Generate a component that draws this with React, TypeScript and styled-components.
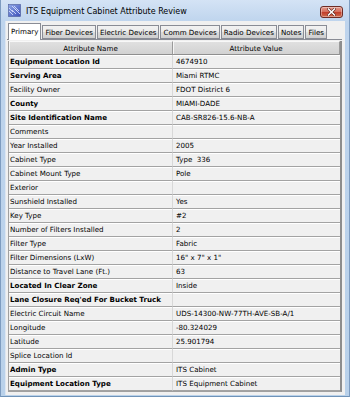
import React from "react";
import styled, { createGlobalStyle } from "styled-components";

const Global = createGlobalStyle`
  html, body { margin: 0; padding: 0; background: #b9d1ea; }
  * { box-sizing: border-box; }
`;

const Window = styled.div`
  width: 350px;
  height: 397px;
  display: flex;
  flex-direction: column;
  background: linear-gradient(180deg, #d4e3f5 0px, #bed4ed 22px, #b9d1ea 100%);
  border-left: 1px solid #7e9cc0;
  border-right: 1px solid #7e9cc0;
  border-bottom: 1px solid #6f93b8;
  padding: 0 4px 4px 4px;
  font-family: "DejaVu Sans", sans-serif;
  overflow: hidden;
`;

const TitleBar = styled.div`
  height: 21px;
  flex: none;
  display: flex;
  align-items: center;
  padding: 0 2px 0 3px;
  gap: 5px;
`;

const Title = styled.div`
  flex: 1;
  font-size: 8px;
  color: #000;
  white-space: nowrap;
  padding-top: 1px;
`;

const CloseButton = styled.div`
  width: 23px;
  height: 12px;
  margin-top: 3px;
  border: 1px solid #6e2c25;
  border-radius: 3px;
  background: linear-gradient(180deg, #e49a8c 0%, #d5705f 45%, #c2402c 55%, #d06a4c 100%);
  display: flex;
  align-items: center;
  justify-content: center;
  box-shadow: inset 0 0 0 1px rgba(255, 255, 255, 0.35);
`;

const Content = styled.div`
  flex: 1;
  background: #f0f0f0;
  display: flex;
  flex-direction: column;
  border-left: 1px solid #dde6f1;
  padding: 0 3px 3px 1px;
`;

const TabStrip = styled.div`
  height: 18px;
  flex: none;
  display: flex;
  align-items: flex-end;
  padding-left: 1px;
  gap: 1px;
`;

const Tab = styled.div<{ $active?: boolean }>`
  height: ${(p) => (p.$active ? "17px" : "14px")};
  padding: 0 2px ${(p) => (p.$active ? "2px" : "0")} 2px;
  display: flex;
  align-items: center;
  font-size: 7.1px;
  color: #000;
  white-space: nowrap;
  border: 1px solid #898c95;
  border-bottom: ${(p) => (p.$active ? "none" : "1px solid #898c95")};
  background: ${(p) =>
    p.$active ? "#ffffff" : "linear-gradient(180deg, #f2f2f2 0%, #ebebeb 50%, #dddddd 51%, #cfcfcf 100%)"};
  margin-bottom: ${(p) => (p.$active ? "-1px" : "0")};
  position: relative;
  z-index: ${(p) => (p.$active ? 1 : 0)};
`;

const Panel = styled.div`
  flex: 1;
  border-top: 1px solid #898c95;
  padding: 1px 0 0 1px;
  display: flex;
  flex-direction: column;
`;

const Table = styled.div`
  display: grid;
  grid-template-columns: 164px 1fr;
  grid-auto-rows: 14px;
  border-left: 1px solid #a0a0a0;
  border-right: 2px solid #8d8d8d;
  border-bottom: 1px solid #a0a0a0;
`;

const HeaderCell = styled.div`
  height: 14px;
  display: flex;
  align-items: center;
  justify-content: center;
  font-size: 7.1px;
  color: #000;
  background: linear-gradient(180deg, #e0e0e0 0%, #d2d2d2 100%);
  border-top: 1px solid #f8f8f8;
  border-bottom: 1px solid #8f8f8f;
  border-right: 1px solid #9a9a9a;
  box-shadow: inset 1px 0 0 #f6f6f6;
`;

const Cell = styled.div<{ $bold?: boolean; $name?: boolean }>`
  height: 14px;
  display: flex;
  align-items: center;
  padding-left: ${(p) => (p.$name ? "1px" : "3px")};
  font-size: 7.1px;
  font-weight: ${(p) => (p.$bold ? 700 : 400)};
  color: #000;
  white-space: pre;
  overflow: hidden;
  background: #f0f0f0;
  border-bottom: 1px solid #a3a3a3;
  box-shadow: inset 0 1px 0 #ffffff;
  border-right: ${(p) => (p.$name ? "1px solid #d8d8d8" : "none")};
`;

const rows: [string, string, boolean][] = [
  ["Equipment Location Id", "4674910", true],
  ["Serving Area", "Miami RTMC", true],
  ["Facility Owner", "FDOT District 6", false],
  ["County", "MIAMI-DADE", true],
  ["Site Identification Name", "CAB-SR826-15.6-NB-A", true],
  ["Comments", "", false],
  ["Year Installed", "2005", false],
  ["Cabinet Type", "Type  336", false],
  ["Cabinet Mount Type", "Pole", false],
  ["Exterior", "", false],
  ["Sunshield Installed", "Yes", false],
  ["Key Type", "#2", false],
  ["Number of Filters Installed", "2", false],
  ["Filter Type", "Fabric", false],
  ["Filter Dimensions (LxW)", "16\" x 7\" x 1\"", false],
  ["Distance to Travel Lane (Ft.)", "63", false],
  ["Located In Clear Zone", "Inside", true],
  ["Lane Closure Req'ed For Bucket Truck", "", true],
  ["Electric Circuit Name", "UDS-14300-NW-77TH-AVE-SB-A/1", false],
  ["Longitude", "-80.324029", false],
  ["Latitude", "25.901794", false],
  ["Splice Location Id", "", false],
  ["Admin Type", "ITS Cabinet", true],
  ["Equipment Location Type", "ITS Equipment Cabinet", true],
];

const tabs = ["Primary", "Fiber Devices", "Electric Devices", "Comm Devices", "Radio Devices", "Notes", "Files"];

const AppIcon = () => (
  <svg width="13" height="13" viewBox="0 0 13 13">
    <defs>
      <linearGradient id="ig" x1="0" y1="0" x2="1" y2="1">
        <stop offset="0" stopColor="#8fa8e8" />
        <stop offset="1" stopColor="#3c4fb8" />
      </linearGradient>
    </defs>
    <rect x="0.5" y="0.5" width="12" height="12" fill="url(#ig)" stroke="#4a5a9a" strokeWidth="0.6" />
    <path d="M1 4 L5 8 M1 7 L5 11 M4 2 L9 7 M6 2 L11 7 M7 5 L12 10 M4 6 L8 10" stroke="#dfe6ff" strokeWidth="0.8" />
  </svg>
);

const CloseX = () => (
  <svg width="9" height="8" viewBox="0 0 9 8">
    <path d="M1.5 1 L7.5 7 M7.5 1 L1.5 7" stroke="#5a2019" strokeWidth="2.6" strokeLinecap="square" />
    <path d="M1.5 1 L7.5 7 M7.5 1 L1.5 7" stroke="#ffffff" strokeWidth="1.5" strokeLinecap="square" />
  </svg>
);

export default function App() {
  return (
    <>
      <Global />
      <Window>
        <TitleBar>
          <AppIcon />
          <Title>ITS Equipment Cabinet Attribute Review</Title>
          <CloseButton>
            <CloseX />
          </CloseButton>
        </TitleBar>
        <Content>
          <TabStrip>
            {tabs.map((t, i) => (
              <Tab key={t} $active={i === 0}>
                {t}
              </Tab>
            ))}
          </TabStrip>
          <Panel>
            <Table>
              <HeaderCell>Attribute Name</HeaderCell>
              <HeaderCell>Attribute Value</HeaderCell>
              {rows.map(([n, v, b]) => (
                <React.Fragment key={n}>
                  <Cell $name $bold={b}>
                    {n}
                  </Cell>
                  <Cell>{v}</Cell>
                </React.Fragment>
              ))}
            </Table>
          </Panel>
        </Content>
      </Window>
    </>
  );
}
